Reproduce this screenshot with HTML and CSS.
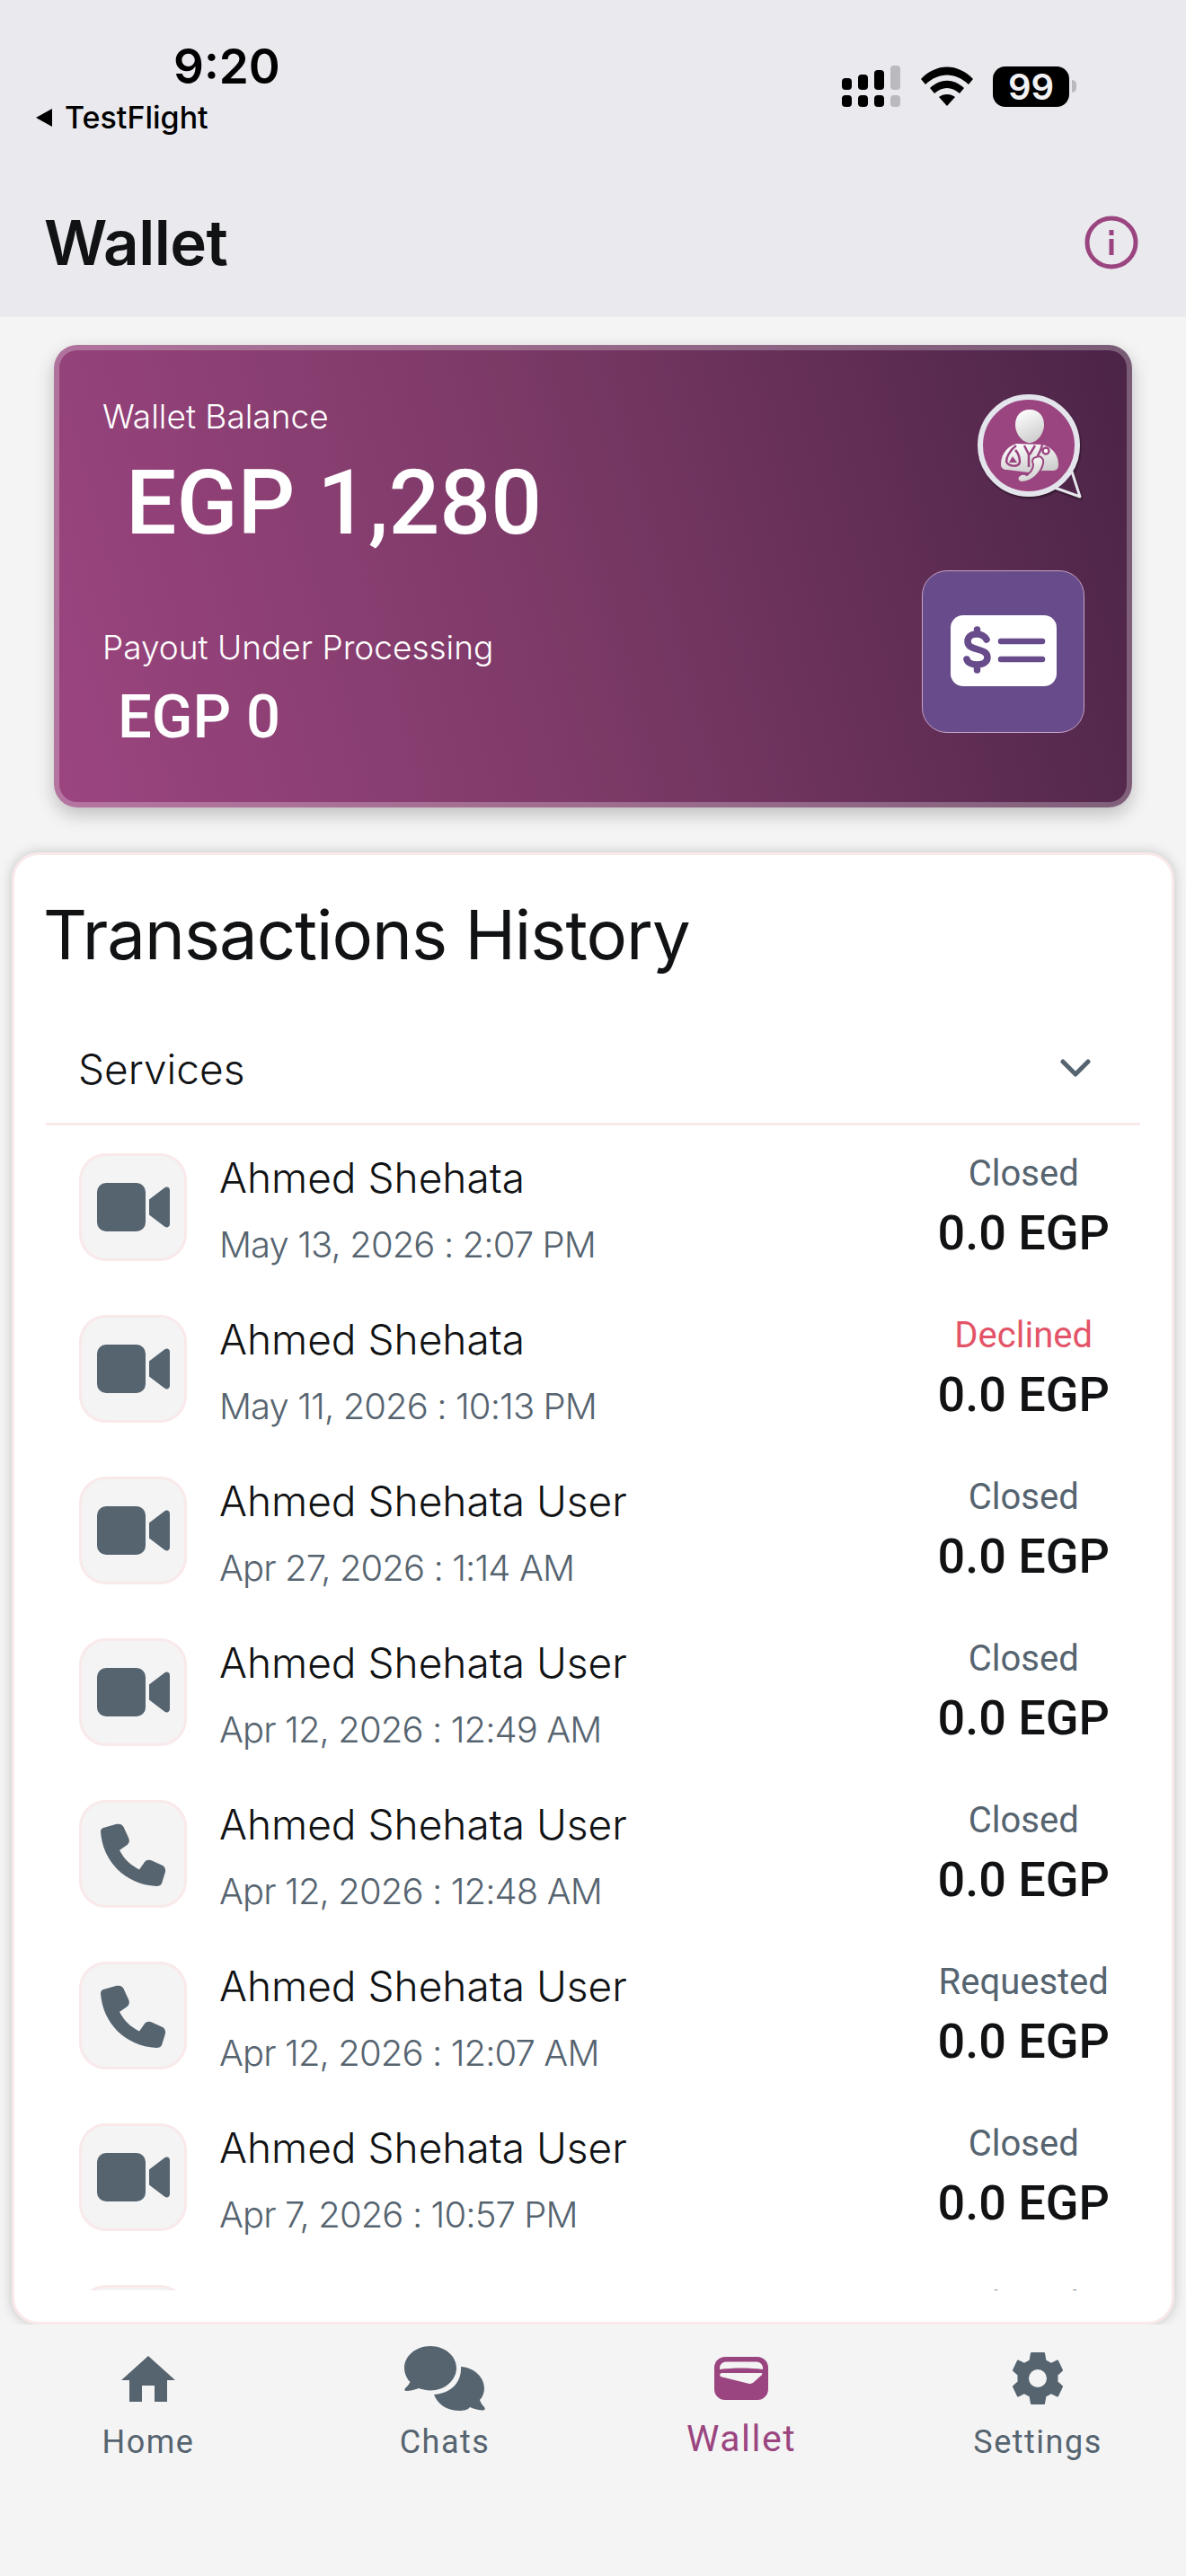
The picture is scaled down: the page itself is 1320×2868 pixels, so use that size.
FILE: index.html
```html
<!DOCTYPE html>
<html lang="en">
<head>
    <meta charset="UTF-8">
    <meta name="viewport" content="width=device-width, initial-scale=1.0">
    <title>Wallet</title>
    <link rel="stylesheet" href="styles.css">
</head>
<body>
    <svg class="icon-defs" width="0" height="0">
        <symbol id="ico-video" viewBox="0 0 81 54">
            <path d="M10 0H44a10 10 0 0 1 10 10V44a10 10 0 0 1-10 10H10A10 10 0 0 1 0 44V10A10 10 0 0 1 10 0Z"/>
            <path d="M58 18.500 75 5.500C78 3.500 81 5 81 8.500V45.500C81 49 78 50.500 75 48.500L58 35.500Z"/>
        </symbol>
        <symbol id="ico-phone" viewBox="0 0 72 72">
            <path d="M3 7 17 3C21 2 24 3 25.500 6L31 18C32.500 21 32 24 29.500 26L21 32C27 43 33 48 43 53.500L49 45C51 42.500 54 42 57 43.500L69 49C71.500 50.500 72.500 53 72 56L68 69C67 71 65 72 62 72 27 70 2 44 0 11 0 9 1 8 3 7Z"/>
        </symbol>
    </svg>

    <div class="screen">
        <header class="top-bar">
            <div class="status-bar">
                <div class="status-left">
                    <div class="clock">9:20</div>
                    <div class="back-app">
                        <svg class="back-arrow" viewBox="0 0 22 22"><path d="M20 1 2 11l18 10Z"/></svg>
                        <span>TestFlight</span>
                    </div>
                </div>
                <div class="status-right">
                    <svg class="signal" viewBox="0 0 65 46">
                        <rect x="0" y="14" width="11" height="13" rx="4"/>
                        <rect x="18" y="10" width="11" height="17" rx="4"/>
                        <rect x="36" y="5" width="11" height="22" rx="4"/>
                        <rect class="dim" x="54" y="0" width="11" height="27" rx="4"/>
                        <rect x="0" y="33" width="11" height="13" rx="4"/>
                        <rect x="18" y="33" width="11" height="13" rx="4"/>
                        <rect x="36" y="33" width="11" height="13" rx="4"/>
                        <rect class="dim" x="54" y="33" width="11" height="13" rx="4"/>
                    </svg>
                    <svg class="wifi" viewBox="0 0 58 44">
                        <path d="M0 14C17-4 41-4 58 14L53 20C38 6 20 6 5 20Z"/>
                        <path d="M10 24C22 13 36 13 48 24L43 30C34 22 24 22 15 30Z"/>
                        <path d="M20 34C25 30 33 30 38 34L29 44Z"/>
                    </svg>
                    <div class="battery"><span>99</span></div>
                    <div class="battery-nub"></div>
                </div>
            </div>
            <div class="title-row">
                <h1>Wallet</h1>
                <svg class="info-icon" viewBox="0 0 60 60">
                    <circle cx="30" cy="30" r="27" fill="none" stroke="#9b4580" stroke-width="5"/>
                    <rect x="27.500" y="26" width="5" height="18" fill="#9b4580"/>
                    <rect x="27.500" y="16" width="5" height="6" fill="#9b4580"/>
                </svg>
            </div>
        </header>

        <main class="content">
            <section class="balance-card">
                <div class="balance-info">
                    <div class="balance-label">Wallet Balance</div>
                    <div class="balance-amount">EGP 1,280</div>
                    <div class="payout-label">Payout Under Processing</div>
                    <div class="payout-amount">EGP 0</div>
                </div>
                <div class="balance-side">
                    <svg class="doctor-logo" viewBox="0 0 122 122">
                        <defs>
                            <linearGradient id="silver" x1="0.200" y1="0" x2="0.600" y2="1">
                                <stop offset="0" stop-color="#ffffff"/>
                                <stop offset="1" stop-color="#cdcdcd"/>
                            </linearGradient>
                        </defs>
                        <path d="M87 107 115 117 106 89Z" fill="#4e2549" stroke="#e6e6ec" stroke-width="3" stroke-linejoin="round"/>
                        <circle cx="58" cy="60" r="54" fill="#9b4580" stroke="#e4e5ec" stroke-width="6"/>
                        <path d="M59 20C69 20 75 27 75 37 75 47 67 57 59 57 51 57 43 47 43 37 43 27 49 20 59 20Z" fill="url(#silver)"/>
                        <path d="M44 58C34 61 27 70 27 81 27 85 30 87 34 87L58 90 74 88 86 88C90 87 91 85 91 81 91 70 84 62 73 59Z" fill="url(#silver)"/>
                        <path d="M44 60C36 66 33 74 33 78 36 84 46 84 48 79 48 74 46 68 43 65" fill="none" stroke="#9b4580" stroke-width="2.500"/>
                        <path d="M40 72 36 79H45Z" fill="#9b4580"/>
                        <path d="M53 60 58 70V84M65 60 59 70" fill="none" stroke="#9b4580" stroke-width="2.500"/>
                        <path d="M73 59C72 66 68 70 68 72" fill="none" stroke="#9b4580" stroke-width="2.500"/>
                        <circle cx="77" cy="66" r="3.500" fill="#fff" stroke="#9b4580" stroke-width="2.500"/>
                        <path d="M66 73C71 71 75 74 74 80 72 90 62 101 50 101 45 101 44 95 48 93 51 91 54 92 56 93 60 90 63 85 63 81 61 77 62 74 66 73Z" fill="url(#silver)" stroke="#9b4580" stroke-width="2"/>
                    </svg>
                    <div class="payout-btn">
                        <svg viewBox="0 0 118 79">
                            <rect width="118" height="79" rx="14" fill="#fff"/>
                            <path d="M40 27C37 22 33 21 29 21 22 21 19 25 19 29 19 41 41 35 41 47 41 52 36 55 29 55 24 55 19 53 18 49M29.500 16V21M29.500 55V61" fill="none" stroke="#674b8a" stroke-width="7.500" stroke-linecap="round"/>
                            <path d="M56 29H102M56 49H102" fill="none" stroke="#674b8a" stroke-width="6.500" stroke-linecap="round"/>
                        </svg>
                    </div>
                </div>
            </section>

            <section class="history-card">
                <h2>Transactions History</h2>
                <div class="filter-row">
                    <span>Services</span>
                    <svg class="chevron" viewBox="0 0 34 20"><path d="M3 3 17 17 31 3" fill="none" stroke="#566470" stroke-width="5" stroke-linecap="round" stroke-linejoin="round"/></svg>
                </div>
                <div class="tx-list">
                    <div class="tx-row">
                        <div class="tx-icon"><svg class="video"><use href="#ico-video"/></svg></div>
                        <div class="tx-main"><div class="tx-name">Ahmed Shehata</div><div class="tx-date">May 13, 2026 : 2:07 PM</div></div>
                        <div class="tx-side"><div class="tx-status">Closed</div><div class="tx-amount">0.0 EGP</div></div>
                    </div>
                    <div class="tx-row">
                        <div class="tx-icon"><svg class="video"><use href="#ico-video"/></svg></div>
                        <div class="tx-main"><div class="tx-name">Ahmed Shehata</div><div class="tx-date">May 11, 2026 : 10:13 PM</div></div>
                        <div class="tx-side"><div class="tx-status declined">Declined</div><div class="tx-amount">0.0 EGP</div></div>
                    </div>
                    <div class="tx-row">
                        <div class="tx-icon"><svg class="video"><use href="#ico-video"/></svg></div>
                        <div class="tx-main"><div class="tx-name">Ahmed Shehata User</div><div class="tx-date">Apr 27, 2026 : 1:14 AM</div></div>
                        <div class="tx-side"><div class="tx-status">Closed</div><div class="tx-amount">0.0 EGP</div></div>
                    </div>
                    <div class="tx-row">
                        <div class="tx-icon"><svg class="video"><use href="#ico-video"/></svg></div>
                        <div class="tx-main"><div class="tx-name">Ahmed Shehata User</div><div class="tx-date">Apr 12, 2026 : 12:49 AM</div></div>
                        <div class="tx-side"><div class="tx-status">Closed</div><div class="tx-amount">0.0 EGP</div></div>
                    </div>
                    <div class="tx-row">
                        <div class="tx-icon"><svg class="phone"><use href="#ico-phone"/></svg></div>
                        <div class="tx-main"><div class="tx-name">Ahmed Shehata User</div><div class="tx-date">Apr 12, 2026 : 12:48 AM</div></div>
                        <div class="tx-side"><div class="tx-status">Closed</div><div class="tx-amount">0.0 EGP</div></div>
                    </div>
                    <div class="tx-row">
                        <div class="tx-icon"><svg class="phone"><use href="#ico-phone"/></svg></div>
                        <div class="tx-main"><div class="tx-name">Ahmed Shehata User</div><div class="tx-date">Apr 12, 2026 : 12:07 AM</div></div>
                        <div class="tx-side"><div class="tx-status">Requested</div><div class="tx-amount">0.0 EGP</div></div>
                    </div>
                    <div class="tx-row">
                        <div class="tx-icon"><svg class="video"><use href="#ico-video"/></svg></div>
                        <div class="tx-main"><div class="tx-name">Ahmed Shehata User</div><div class="tx-date">Apr 7, 2026 : 10:57 PM</div></div>
                        <div class="tx-side"><div class="tx-status">Closed</div><div class="tx-amount">0.0 EGP</div></div>
                    </div>
                    <div class="tx-row">
                        <div class="tx-icon"><svg class="video"><use href="#ico-video"/></svg></div>
                        <div class="tx-main"><div class="tx-name">Ahmed Shehata User</div><div class="tx-date">Apr 7, 2026 : 10:50 PM</div></div>
                        <div class="tx-side"><div class="tx-status">Closed</div><div class="tx-amount">0.0 EGP</div></div>
                    </div>
                </div>
            </section>
        </main>

        <nav class="tab-bar">
            <div class="tab">
                <div class="tab-icon">
                    <svg class="home" viewBox="0 0 60 51"><path d="M30 0 60 27H51V51H37V33H23V51H9V27H0Z"/></svg>
                </div>
                <span>Home</span>
            </div>
            <div class="tab">
                <div class="tab-icon">
                    <svg class="chats" viewBox="0 0 90 72">
                        <path d="M29 0C45 0 58 11 58 24.500 58 38 45 49.500 29 49.500 25 49.500 21 48.500 16 47 11 49 6 50 2 50 0 50 0 48 1 47 3 45 5 43 6.500 40 2.500 36 0 30 0 24.500 0 11 13 0 29 0Z"/>
                        <path d="M63 23C78 24 89 35 89 47 89 52 87 57 84 60 85 63 87 66 89 68 90.500 70 89.500 71.500 87 71.500 83 71.500 78 70 73 68 71 71 66 72 61 72 48 72 37 65 33 54 50 53 64 42 63 23Z"/>
                    </svg>
                </div>
                <span>Chats</span>
            </div>
            <div class="tab active">
                <div class="tab-icon">
                    <svg class="wallet" viewBox="0 0 60 48">
                        <path fill-rule="evenodd" d="M12 0H48A12 12 0 0 1 60 12V36A12 12 0 0 1 48 48H12A12 12 0 0 1 0 36V12A12 12 0 0 1 12 0ZM13 5.500A7 7 0 0 0 6 12.500V14C20 12 40 12 54 14V12.500A7 7 0 0 0 47 5.500ZM8 18Q5 19 7 22L39 30Q41 30 43 29L53 20Q54 18 52 18Z"/>
                    </svg>
                </div>
                <span>Wallet</span>
            </div>
            <div class="tab">
                <div class="tab-icon">
                    <svg class="gear" viewBox="0 0 56 58">
                        <path fill-rule="evenodd" stroke="#566470" stroke-width="2" stroke-linejoin="round" d="M21 1H35L36.500 9.500 43 13 50 9.500 55 20 49.500 25V33L55 38 50 48.500 43 45 36.500 48.500 35 57H21L19.500 48.500 13 45 6 48.500 1 38 6.500 33V25L1 20 6 9.500 13 13 19.500 9.500ZM28 18A11 11 0 1 0 28 40 11 11 0 1 0 28 18Z"/>
                    </svg>
                </div>
                <span>Settings</span>
            </div>
        </nav>
    </div>
</body>
</html>
```

FILE: styles.css
```css
* {
    margin: 0;
    padding: 0;
    box-sizing: border-box;
}
body {
    font-family: 'Inter', sans-serif;
    background: #f4f4f4;
    color: #101214;
}
.icon-defs {
    display: block;
    height: 0;
}
.screen {
    width: 1320px;
    height: 2868px;
    display: flex;
    flex-direction: column;
    overflow: hidden;
}

/* Top bar */
.top-bar {
    height: 353px;
    background: #e9e9ee;
    padding-left: 38px;
    padding-right: 53px;
    flex-shrink: 0;
}
.status-bar {
    height: 235px;
    padding-top: 44px;
    display: flex;
    justify-content: space-between;
    align-items: flex-start;
}
.clock {
    font-size: 53px;
    line-height: 60px;
    font-weight: 600;
    color: #000;
    margin-left: 155px;
}
.back-app {
    display: flex;
    align-items: center;
    gap: 12px;
    margin-top: 6px;
    font-size: 34px;
    line-height: 42px;
    font-weight: 500;
    color: #000;
}
.back-arrow {
    width: 22px;
    height: 22px;
    fill: #000;
}
.status-right {
    display: flex;
    align-items: center;
    padding-top: 29px;
    margin-right: 69px;
}
.signal {
    width: 65px;
    height: 46px;
    fill: #000;
}
.signal .dim {
    fill: #b9b9be;
}
.wifi {
    width: 58px;
    height: 44px;
    fill: #000;
    margin-left: 23px;
}
.battery {
    width: 85px;
    height: 45px;
    margin-left: 22px;
    background: #000;
    border-radius: 14px;
    color: #f2f2f5;
    font-size: 40px;
    font-weight: 600;
    line-height: 45px;
    text-align: center;
}
.battery-nub {
    width: 5px;
    height: 14px;
    margin-left: 3px;
    background: #b9b9be;
    border-radius: 0 6px 6px 0;
}
.title-row {
    display: flex;
    justify-content: space-between;
    align-items: center;
    height: 70px;
    margin-left: 11px;
}
.title-row h1 {
    font-size: 69px;
    font-weight: 600;
    line-height: 70px;
    letter-spacing: -0.5px;
}
.info-icon {
    width: 60px;
    height: 60px;
}

/* Main */
.content {
    height: 2235px;
    flex-shrink: 0;
    padding: 31px 13px 0;
    display: flex;
    flex-direction: column;
}
.balance-card {
    width: 1200px;
    height: 515px;
    margin-left: 47px;
    flex-shrink: 0;
    border: 6px solid rgba(255, 255, 255, 0.26);
    border-radius: 26px;
    background: linear-gradient(75deg, #9c4580 0%, #7d3a68 45%, #4b2447 100%) border-box;
    box-shadow: 0 8px 20px rgba(0, 0, 0, 0.22);
    padding: 53px 47px 0 48px;
    display: flex;
    justify-content: space-between;
    color: white;
}
.balance-label, .payout-label {
    font-size: 37px;
    line-height: 42px;
    font-weight: 300;
}
.balance-amount {
    font-family: 'Roboto', sans-serif;
    font-weight: 500;
    font-size: 100px;
    line-height: 118px;
    margin-left: 26px;
    margin-top: 16px;
}
.payout-label {
    margin-top: 81px;
}
.payout-amount {
    font-family: 'Roboto', sans-serif;
    font-weight: 500;
    font-size: 67px;
    line-height: 80px;
    margin-left: 17px;
    margin-top: 16px;
}
.balance-side {
    display: flex;
    flex-direction: column;
    align-items: flex-end;
}
.doctor-logo {
    width: 122px;
    height: 122px;
    margin-top: -7px;
    margin-right: -2px;
    filter: drop-shadow(1px 2px 1px rgba(0, 0, 0, 0.45));
}
.payout-btn {
    width: 181px;
    height: 181px;
    margin-top: 77px;
    background: #674b8a;
    border: 1px solid #c7a3c4;
    border-radius: 28px;
    padding-top: 49px;
    text-align: center;
}
.payout-btn svg {
    width: 118px;
    height: 79px;
}

/* History */
.history-card {
    margin-top: 50px;
    height: 1639px;
    background: white;
    border: 3px solid #f9e9ea;
    border-radius: 30px;
    box-shadow: 0 0 14px rgba(0, 0, 0, 0.2);
    padding: 0 35px;
    display: flex;
    flex-direction: column;
    overflow: hidden;
}
.history-card h2 {
    font-size: 76px;
    font-weight: 400;
    line-height: 90px;
    margin-top: 43px;
    margin-left: -3px;
    letter-spacing: -1px;
}
.filter-row {
    height: 124px;
    margin-top: 44px;
    flex-shrink: 0;
    padding: 0 55px 0 36px;
    border-bottom: 3px solid #f9e9ea;
    display: flex;
    justify-content: space-between;
    align-items: center;
    font-size: 46px;
    font-weight: 300;
}
.chevron {
    width: 34px;
    height: 20px;
    margin-top: -2px;
}
.tx-list {
    height: 1297px;
    overflow: hidden;
    flex-shrink: 0;
}
.tx-row {
    height: 180px;
    padding: 31px 34px 0 37px;
    display: flex;
    align-items: flex-start;
}
.tx-icon {
    width: 120px;
    height: 120px;
    background: #f4f4f4;
    border: 3px solid #f9e9ea;
    border-radius: 30px;
    display: flex;
    justify-content: center;
    align-items: center;
    fill: #566470;
}
.tx-icon .video {
    width: 81px;
    height: 54px;
}
.tx-icon .phone {
    width: 72px;
    height: 72px;
}
.tx-main {
    margin-left: 36px;
    flex: 1;
}
.tx-name {
    font-size: 46px;
    font-weight: 300;
    line-height: 54px;
}
.tx-date {
    font-size: 40px;
    font-weight: 300;
    line-height: 48px;
    letter-spacing: -0.9px;
    color: #566470;
    margin-top: 24px;
}
.tx-side {
    font-family: 'Roboto', sans-serif;
    text-align: center;
    font-weight: 500;
}
.tx-status {
    font-size: 40px;
    font-weight: 400;
    line-height: 46px;
    color: #566470;
    margin-top: 0;
}
.tx-status.declined {
    color: #e35468;
}
.tx-amount {
    font-size: 54px;
    line-height: 60px;
    margin-top: 13px;
}

/* Bottom tabs */
.tab-bar {
    flex: 1;
    background: #f4f4f4;
    display: flex;
    padding-top: 22px;
    position: relative;
}
.tab {
    width: 330px;
    display: flex;
    flex-direction: column;
    align-items: center;
    font-family: 'Roboto', sans-serif;
    font-size: 36px;
    letter-spacing: 1.5px;
    color: #566470;
}
.tab-icon {
    height: 76px;
    display: flex;
    justify-content: center;
    align-items: center;
    fill: #566470;
}
.tab span {
    margin-top: 12px;
}
.home {
    width: 60px;
    height: 51px;
}
.chats {
    width: 90px;
    height: 72px;
}
.wallet {
    width: 60px;
    height: 48px;
}
.gear {
    width: 56px;
    height: 58px;
}
.tab.active {
    color: #9b4580;
    font-size: 41px;
}
.tab.active .tab-icon {
    fill: #9b4580;
}
.tab.active span {
    margin-top: 5px;
}
```
